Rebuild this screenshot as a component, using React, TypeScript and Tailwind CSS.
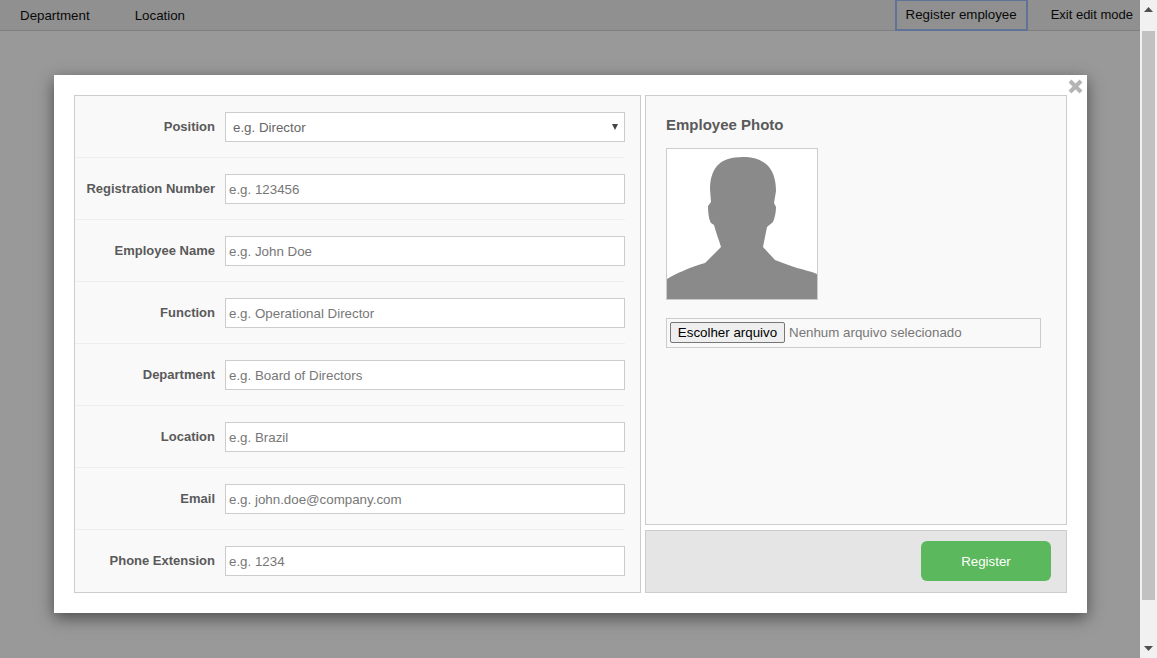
const fields = [
  { label: 'Registration Number', placeholder: 'e.g. 123456' },
  { label: 'Employee Name', placeholder: 'e.g. John Doe' },
  { label: 'Function', placeholder: 'e.g. Operational Director' },
  { label: 'Department', placeholder: 'e.g. Board of Directors' },
  { label: 'Location', placeholder: 'e.g. Brazil' },
  { label: 'Email', placeholder: 'e.g. john.doe@company.com' },
  { label: 'Phone Extension', placeholder: 'e.g. 1234' },
];

const Silhouette = () => (
  <svg viewBox="0 0 150 150" className="h-[150px] w-[150px]">
    <path
      fill="#8a8a8a"
      d="M76 8 C64 8 55 11 50 17 C45 23 43 31 43 40 L44 53 L41 57 C41 64 42 71 44 74 L47 76 C49 84 52 91 54 98 L38 114 C30 116 22 119 16 122 C10 124 5 127 0 130 L0 150 L150 150 L150 125 C143 122 137 121 130 119 C122 116 115 114 108 111 L96 98 L100 78 L106 73 C108 68 109 63 109 58 L107 54 L109 42 C109 33 107 24 102 18 C96 11 87 8 76 8 Z"
    />
  </svg>
);

export default function App() {
  return (
    <div className="flex h-[658px] w-full overflow-hidden bg-white font-['Liberation_Sans',Arial,sans-serif] text-[13.33px]">
      <div className="relative min-w-0 flex-1">
        <nav className="flex h-[31px] items-center justify-between border-b border-[#d4d4d4] bg-[#f0f0f0] text-[#111]">
          <ul className="flex gap-[45px] pl-5 pt-[1px]">
            <li>Department</li>
            <li>Location</li>
          </ul>
          <div className="flex items-center gap-[23px] pr-[7px]">
            <button
              type="button"
              className="-mt-[1px] h-[32px] w-[133px] border-2 border-[#9fc0ff] pt-[1px] text-center"
            >
              Register employee
            </button>
            <span className="-mt-[1px] text-[13px]">Exit edit mode</span>
          </div>
        </nav>

        <div className="absolute inset-0 bg-black/40 pt-[75px] pl-[54px]">
          <div className="relative flex h-[538px] w-[1033px] gap-1 bg-white p-5 shadow-[0_5px_15px_rgba(0,0,0,0.5)]">
            <svg viewBox="0 0 15 15" className="absolute top-[4px] right-[4px] h-[15px] w-[15px]">
              <path d="M2 2 L13 13 M13 2 L2 13" stroke="#b4b4b4" strokeWidth="4" />
            </svg>

            <form className="h-[498px] w-[567px] border border-[#ccc] bg-[#f9f9f9] pt-4 pr-[15px]">
              <div className="flex h-[46px] border-b border-[#eee]">
                <label className="w-[140px] pt-[5px] text-right text-[13px] font-bold text-[#5a5a5a]">Position</label>
                <div className="relative ml-[10px] h-[30px] w-[400px]">
                  <select className="h-full w-full appearance-none border border-[#ccc] bg-white pt-[1px] pl-[7px] text-[#666]">
                    <option>e.g. Director</option>
                  </select>
                  <svg viewBox="0 0 6 6" className="pointer-events-none absolute top-[12px] right-[7px] h-[6px] w-[6px]">
                    <path d="M0 0 L6 0 L3 6 Z" fill="#444" />
                  </svg>
                </div>
              </div>
              {fields.map((field, i) => (
                <div
                  key={field.label}
                  className={
                    i === fields.length - 1
                      ? 'flex h-[62px] pt-4'
                      : 'flex h-[62px] border-b border-[#eee] pt-4'
                  }
                >
                  <label className="w-[140px] pt-[5px] text-right text-[13px] font-bold whitespace-nowrap text-[#5a5a5a]">
                    {field.label}
                  </label>
                  <input
                    type="text"
                    placeholder={field.placeholder}
                    className="ml-[10px] h-[30px] w-[400px] border border-[#ccc] bg-white px-[3px] text-[#333] placeholder:text-[#777]"
                  />
                </div>
              ))}
            </form>

            <div className="flex flex-1 flex-col gap-[5px]">
              <section className="h-[430px] border border-[#ccc] bg-[#f9f9f9] px-5 pt-5">
                <h3 className="text-[15px] leading-[18px] font-bold text-[#5a5a5a]">Employee Photo</h3>
                <div className="mt-[14px] h-[152px] w-[152px] border border-[#ccc] bg-white">
                  <Silhouette />
                </div>
                <div className="mt-[18px] flex h-[30px] w-[375px] items-center gap-1 border border-[#ccc] px-[3px]">
                  <button
                    type="button"
                    className="-mt-[1px] h-[21px] w-[115px] rounded-[2px] border border-[#767676] bg-[#efefef] text-black"
                  >
                    Escolher arquivo
                  </button>
                  <span className="-mt-[1px] text-[#777]">Nenhum arquivo selecionado</span>
                </div>
              </section>
              <div className="flex h-[63px] items-center justify-end border border-[#ccc] bg-[#e5e5e5] pr-[15px] pb-[2px]">
                <button
                  type="button"
                  className="h-10 w-[130px] rounded-md bg-[#5cb85c] pt-[2px] text-white"
                >
                  Register
                </button>
              </div>
            </div>
          </div>
        </div>
      </div>

      <div className="flex w-[17px] shrink-0 flex-col items-center bg-[#f1f1f1]">
        <div className="flex h-[31px] w-full items-start justify-center pt-[7px]">
          <svg viewBox="0 0 9 5" className="h-[5px] w-[9px]">
            <path d="M0 5 L4.5 0 L9 5 Z" fill="#505050" />
          </svg>
        </div>
        <div className="h-[569px] w-[13px] bg-[#c1c1c1]" />
        <div className="flex flex-1 w-full items-end justify-center pb-[7px]">
          <svg viewBox="0 0 9 5" className="h-[5px] w-[9px]">
            <path d="M0 0 L4.5 5 L9 0 Z" fill="#505050" />
          </svg>
        </div>
      </div>
    </div>
  );
}
